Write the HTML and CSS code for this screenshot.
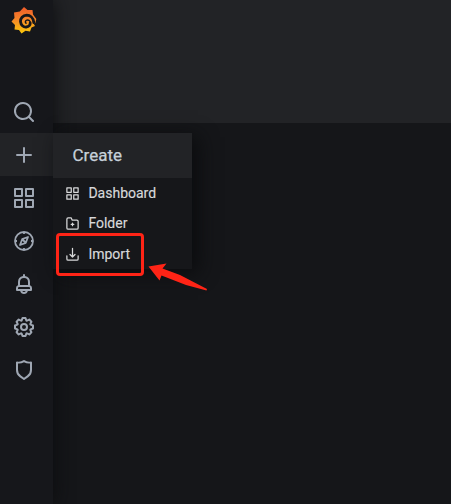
FILE: index.html
```html
<!DOCTYPE html>
<html lang="en">
<head>
<meta charset="utf-8">
<title>Grafana</title>
<link rel="stylesheet" href="styles.css">
</head>
<body>
<div class="app">
  <nav class="sidebar">
    <a class="logo">
      <svg width="26" height="28" viewBox="0 0 26 28">
        <defs><linearGradient id="flame" x1="0" y1="0" x2="0" y2="1"><stop offset="0" stop-color="#f05a28"/><stop offset=".45" stop-color="#f5842a"/><stop offset="1" stop-color="#fbca0a"/></linearGradient></defs>
        <path fill="url(#flame)" d="M13 1 L16.5 4 L21.5 4 L22 8.5 L25.3 13 L24.3 17 L22.5 17.5 L24 20 L20.5 21.5 L19 25.5 L14.5 24.7 L10.5 27.5 L8 24 L3.5 23.5 L4 19 L.5 15.5 L3.5 12 L3 6.5 L8.8 5.5 Z"/>
        <path class="swirl" d="M22.8 16.5 C22.3 11.5 19 9.2 15.8 9.2 C11.7 9.4 9.3 12.3 9.5 15.7 C9.8 19.2 12.5 21.3 15.3 21 C18 20.8 19.3 18.8 19.2 17"/>
        <path class="swirl inner" d="M19.3 17.2 C19.4 14.8 17.5 13.5 15.8 14.1 C14.2 14.7 14 16.4 15 17.2"/>
      </svg>
    </a>
    <a class="nav-item"><svg class="icon" viewBox="0 0 24 24"><path d="M21.71,20.29,18,16.61A9,9,0,1,0,16.61,18l3.68,3.68a1,1,0,0,0,1.42,0A1,1,0,0,0,21.71,20.29ZM11,18a7,7,0,1,1,7-7A7,7,0,0,1,11,18Z"/></svg></a>
    <div class="nav-item active"><svg class="icon" viewBox="0 0 24 24"><path d="M19,11H13V5a1,1,0,0,0-2,0v6H5a1,1,0,0,0,0,2h6v6a1,1,0,0,0,2,0V13h6a1,1,0,0,0,0-2Z"/></svg>
      <div class="menu">
        <div class="menu-title">Create</div>
        <a class="menu-item"><svg class="small-icon" viewBox="0 0 24 24"><path d="M10,13H3a1,1,0,0,0-1,1v7a1,1,0,0,0,1,1h7a1,1,0,0,0,1-1V14A1,1,0,0,0,10,13ZM9,20H4V15H9ZM21,2H14a1,1,0,0,0-1,1v7a1,1,0,0,0,1,1h7a1,1,0,0,0,1-1V3A1,1,0,0,0,21,2ZM20,9H15V4h5Zm1,4H14a1,1,0,0,0-1,1v7a1,1,0,0,0,1,1h7a1,1,0,0,0,1-1V14A1,1,0,0,0,21,13Zm-1,7H15V15h5ZM10,2H3A1,1,0,0,0,2,3v7a1,1,0,0,0,1,1h7a1,1,0,0,0,1-1V3A1,1,0,0,0,10,2ZM9,9H4V4H9Z"/></svg><span>Dashboard</span></a>
        <a class="menu-item"><svg class="small-icon line" viewBox="0 0 24 24"><path d="M3 5a2 2 0 0 1 2-2h5l1.3 3.5H19a2 2 0 0 1 2 2V19a2 2 0 0 1-2 2H5a2 2 0 0 1-2-2ZM12 11.5v4M10 13.5h4"/></svg><span>Folder</span></a>
        <a class="menu-item"><svg class="small-icon line" viewBox="0 0 24 24"><path d="M12 2v14M8 12l4 4 4-4M3 14v5a2 2 0 0 0 2 2h14a2 2 0 0 0 2-2v-5"/></svg><span>Import</span></a>
      </div>
    </div>
    <a class="nav-item"><svg class="icon" viewBox="0 0 24 24"><path d="M10,13H3a1,1,0,0,0-1,1v7a1,1,0,0,0,1,1h7a1,1,0,0,0,1-1V14A1,1,0,0,0,10,13ZM9,20H4V15H9ZM21,2H14a1,1,0,0,0-1,1v7a1,1,0,0,0,1,1h7a1,1,0,0,0,1-1V3A1,1,0,0,0,21,2ZM20,9H15V4h5Zm1,4H14a1,1,0,0,0-1,1v7a1,1,0,0,0,1,1h7a1,1,0,0,0,1-1V14A1,1,0,0,0,21,13Zm-1,7H15V15h5ZM10,2H3A1,1,0,0,0,2,3v7a1,1,0,0,0,1,1h7a1,1,0,0,0,1-1V3A1,1,0,0,0,10,2ZM9,9H4V4H9Z"/></svg></a>
    <a class="nav-item"><svg class="icon compass" viewBox="0 0 24 24"><circle cx="12" cy="12" r="9"/><path d="M12 3v2M12 19v2M3 12h2M19 12h2M16 8l-2.2 5.8L8 16l2.2-5.8ZM10.5 10.5l3 3"/></svg></a>
    <a class="nav-item"><svg class="icon" viewBox="0 0 24 24"><path d="M18,13.18V10a6,6,0,0,0-5-5.91V3a1,1,0,0,0-2,0V4.09A6,6,0,0,0,6,10v3.18A3,3,0,0,0,4,16v2a1,1,0,0,0,1,1H8.14a4,4,0,0,0,7.72,0H19a1,1,0,0,0,1-1V16A3,3,0,0,0,18,13.18ZM8,10a4,4,0,0,1,8,0v3H8Zm4,10a2,2,0,0,1-1.72-1h3.44A2,2,0,0,1,12,20Zm6-3H6V16a1,1,0,0,1,1-1H17a1,1,0,0,1,1,1Z"/></svg></a>
    <a class="nav-item"><svg class="icon" viewBox="0 0 24 24"><path d="M21.32,9.55l-1.89-.63.89-1.78A1,1,0,0,0,20.13,6L18,3.87a1,1,0,0,0-1.15-.19l-1.78.89-.63-1.89A1,1,0,0,0,13.5,2h-3a1,1,0,0,0-.95.68L8.92,4.57,7.14,3.68A1,1,0,0,0,6,3.87L3.87,6a1,1,0,0,0-.19,1.15l.89,1.78-1.89.63A1,1,0,0,0,2,10.5v3a1,1,0,0,0,.68.95l1.89.63-.89,1.78A1,1,0,0,0,3.87,18L6,20.13a1,1,0,0,0,1.15.19l1.78-.89.63,1.89a1,1,0,0,0,.95.68h3a1,1,0,0,0,.95-.68l.63-1.89,1.78.89A1,1,0,0,0,18,20.13L20.13,18a1,1,0,0,0,.19-1.15l-.89-1.78,1.89-.63A1,1,0,0,0,22,13.5v-3A1,1,0,0,0,21.32,9.55ZM20,12.78l-1.2.4A2,2,0,0,0,17.64,16l.57,1.14-1.1,1.1L16,17.64a2,2,0,0,0-2.79,1.16l-.4,1.2H11.22l-.4-1.2A2,2,0,0,0,8,17.64l-1.14.57-1.1-1.1L6.36,16A2,2,0,0,0,5.2,13.18L4,12.78V11.22l1.2-.4A2,2,0,0,0,6.36,8L5.79,6.89l1.1-1.1L8,6.36A2,2,0,0,0,10.82,5.2l.4-1.2h1.56l.4,1.2A2,2,0,0,0,16,6.36l1.14-.57,1.1,1.1L17.64,8a2,2,0,0,0,1.16,2.79l1.2.4ZM12,8a4,4,0,1,0,4,4A4,4,0,0,0,12,8Zm0,6a2,2,0,1,1,2-2A2,2,0,0,1,12,14Z"/></svg></a>
    <a class="nav-item"><svg class="icon" viewBox="0 0 24 24"><path d="M19.63,3.65a1,1,0,0,0-.84-.2,8,8,0,0,1-6.22-1.27,1,1,0,0,0-1.14,0A8,8,0,0,1,5.21,3.45a1,1,0,0,0-.84.2A1,1,0,0,0,4,4.43v7.45a9,9,0,0,0,3.77,7.33l3.65,2.6a1,1,0,0,0,1.16,0l3.65-2.6A9,9,0,0,0,20,11.88V4.43A1,1,0,0,0,19.63,3.65ZM18,11.88a7,7,0,0,1-2.93,5.7L12,19.77,8.93,17.58A7,7,0,0,1,6,11.88V5.58a10,10,0,0,0,6-1.39,10,10,0,0,0,6,1.39Z"/></svg></a>
  </nav>
  <main class="page"><header class="page-header"></header></main>
  <div class="highlight"></div>
  <svg class="arrow" width="62" height="32" viewBox="0 0 62 32"><path d="M.5 5.5 L18.5 2.5 L14.5 7.5 L32 14 L59 28 L58.5 29.5 L38 24 L13.5 14.5 L11.5 19.5 Z"/></svg>
</div>
</body>
</html>
```
FILE: styles.css
```css
* { box-sizing: border-box; }
body { margin: 0; background: #151619; font-family: Roboto, sans-serif; }
.app { position: relative; display: flex; height: 504px; overflow: hidden; }
.sidebar { position: relative; z-index: 1; width: 53px; flex: none; background: #16171b; box-shadow: 0 0 20px #0b0c0e; }
.logo { display: flex; height: 90px; padding: 6px 0 0 11px; }
.swirl { fill: none; stroke: #16171b; stroke-width: 2.8; stroke-linecap: round; }
.inner { stroke-width: 1.5; }
.nav-item { position: relative; display: flex; align-items: center; height: 43px; padding-left: 12px; }
.active { background: #222326; }
.icon { width: 24px; height: 24px; fill: #9fa7b3; }
.compass { fill: none; stroke: #9fa7b3; stroke-width: 1.8; stroke-linejoin: round; }
.menu { position: absolute; left: 53px; top: 0; width: 139px; height: 136px; background: #16171a; box-shadow: 6px 4px 18px #0b0c0e; }
.menu-title { height: 45px; padding-left: 19.5px; background: #222326; color: #c7d0d9; font-size: 17px; line-height: 45px; -webkit-text-stroke: .25px #c7d0d9; }
.menu-item { display: flex; align-items: center; gap: 8.4px; height: 30.3px; padding-left: 12px; color: #d8d9da; font-size: 14px; -webkit-text-stroke: .15px #d8d9da; }
.small-icon { width: 15px; height: 15px; margin-top: 1px; fill: #d8d9da; }
.line { fill: none; stroke: #d8d9da; stroke-width: 2; stroke-linecap: round; stroke-linejoin: round; }
.page { flex: 1; background: #151619; }
.page-header { height: 123px; background: #222326; }
.highlight { position: absolute; z-index: 2; left: 56px; top: 233px; width: 88px; height: 43px; border: 3px solid #ff2416; border-radius: 4px; }
.arrow { position: absolute; z-index: 2; left: 148px; top: 261px; fill: #ff2416; }
```
